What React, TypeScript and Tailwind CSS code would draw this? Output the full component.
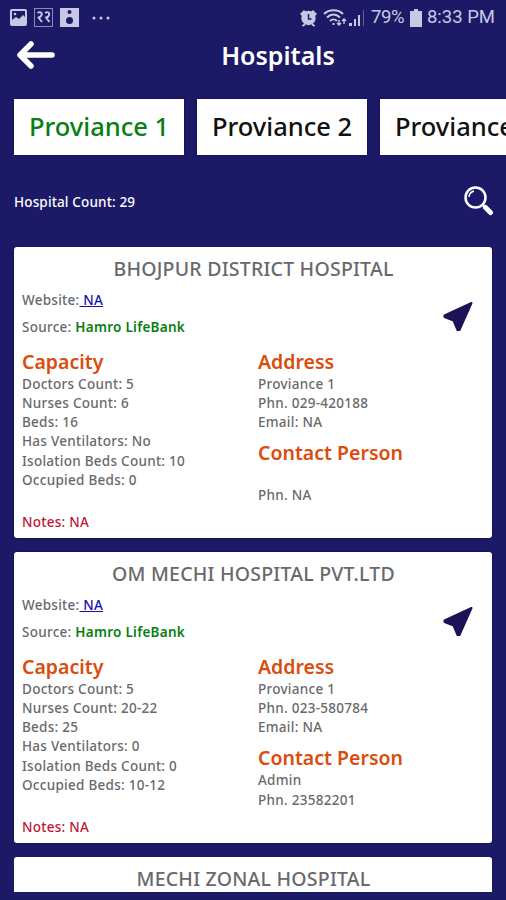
import React from "react";

type Hospital = {
  name: string;
  capacity: string[];
  address: string[];
  contact: string[];
};

const hospitals: Hospital[] = [
  {
    name: "BHOJPUR DISTRICT HOSPITAL",
    capacity: ["Doctors Count: 5", "Nurses Count: 6", "Beds: 16", "Has Ventilators: No", "Isolation Beds Count: 10", "Occupied Beds: 0"],
    address: ["Proviance 1", "Phn. 029-420188", "Email: NA"],
    contact: ["", "Phn. NA"],
  },
  {
    name: "OM MECHI HOSPITAL PVT.LTD",
    capacity: ["Doctors Count: 5", "Nurses Count: 20-22", "Beds: 25", "Has Ventilators: 0", "Isolation Beds Count: 0", "Occupied Beds: 10-12"],
    address: ["Proviance 1", "Phn. 023-580784", "Email: NA"],
    contact: ["Admin", "Phn. 23582201"],
  },
];

function StatusBar() {
  return (
    <div className="flex h-[35px] shrink-0 items-center justify-between pl-[10px] pr-[11px] font-['Roboto',sans-serif] text-[#c9c8e4]">
      <div className="flex items-center">
        <svg width="17" height="17" viewBox="0 0 17 17" fill="none">
          <rect x="1" y="1" width="15" height="15" rx="1" stroke="currentColor" strokeWidth="2" />
          <path d="M2 11l4-3 3 2 4-4 3 3v7H2z" fill="currentColor" />
          <circle cx="5" cy="5" r="1.3" fill="currentColor" />
        </svg>
        <svg className="ml-[7px]" width="19" height="19" viewBox="0 0 19 19" fill="none" stroke="currentColor">
          <rect x=".5" y=".5" width="18" height="18" strokeOpacity=".65" />
          <path d="M3.500 5c3-2 5.500 0 3.500 3-1 2-3 1-3 1l4 5M11 5c3-2 5.500 0 3.500 3-1 2-3 1-3 1l4 5" strokeWidth="1.900" />
        </svg>
        <svg className="ml-[7px]" width="19" height="19" viewBox="0 0 19 19">
          <rect width="19" height="19" fill="currentColor" />
          <circle cx="9.5" cy="4" r="2" fill="#1c1a66" />
          <circle cx="9.5" cy="12.5" r="3.5" fill="#1c1a66" />
        </svg>
        <svg className="ml-[13px]" width="18" height="4" viewBox="0 0 18 4" fill="currentColor">
          <circle cx="2" cy="2" r="1.5" />
          <circle cx="9" cy="2" r="1.5" />
          <circle cx="16" cy="2" r="1.5" />
        </svg>
      </div>
      <div className="flex items-center text-[18.500px] leading-none">
        <svg width="17" height="18" viewBox="0 0 17 18" fill="currentColor">
          <circle cx="8.500" cy="9" r="7.200" />
          <path d="M0 5l4-4 2 2-4 4zM17 5l-4-4-2 2 4 4zM1.500 17l3-3 1 2-2 1.500zM15.500 17l-3-3-1 2 2 1.500z" />
          <path d="M8.500 5v5h3" fill="none" stroke="#1c1a66" strokeWidth="1.500" />
        </svg>
        <svg className="ml-[6px]" width="24" height="18" viewBox="0 0 24 18" fill="none" stroke="currentColor" strokeWidth="2">
          <path d="M1 5c5-5 14-5 19 0M4 8.500c4-4 9-4 13 0M7 12c2-2 5-2 7 0" />
          <path d="M10.500 14v2" />
          <path d="M16 11v5m-2-2l2 2 2-2M21 15v-5m-2 2l2-2 2 2" strokeWidth="1.400" />
        </svg>
        <svg className="ml-[1px]" width="17" height="18" viewBox="0 0 17 18" fill="currentColor">
          <path d="M1 14h3v3H1zM6 10h2v7H6zM10 6h2v11h-2z" />
          <path d="M15 1h1v16h-1z" opacity=".4" />
        </svg>
        <span className="ml-[6px] w-[35px] whitespace-nowrap tracking-[-0.300px]">79%</span>
        <svg className="ml-[4px]" width="12" height="18" viewBox="0 0 12 18" fill="currentColor">
          <path d="M4 0h4v2h4v16H0V2h4z" />
        </svg>
        <span className="ml-[5px] whitespace-nowrap">8:33 PM</span>
      </div>
    </div>
  );
}

function Heading({ children }: { children: string }) {
  return <h3 className="text-[19.500px] font-semibold leading-[27px] text-[#db4c0d]">{children}</h3>;
}

function Lines({ items }: { items: string[] }) {
  return (
    <div className="leading-[19.250px] tracking-[0.270px]">
      {items.map((item, i) => (
        <p key={i} className="h-[19.250px] whitespace-nowrap">{item}</p>
      ))}
    </div>
  );
}

function CardTitle({ children }: { children: string }) {
  return <h2 className="whitespace-nowrap pl-px text-center text-[19.500px] font-medium leading-[27px] tracking-[0.220px]">{children}</h2>;
}

function HospitalCard({ hospital }: { hospital: Hospital }) {
  return (
    <article className="h-[291px] shrink-0 rounded-[3px] bg-white px-[8px] pt-[8px] text-[13.500px] font-medium text-[#69696b] shadow-[0_0_2px_#060550]">
      <CardTitle>{hospital.name}</CardTitle>
      <div className="flex justify-between tracking-[0.270px]">
        <div className="pt-[5px]">
          <p className="h-[27px] leading-[27px]">Website:<a className="text-[#160dae] underline">&nbsp;NA</a></p>
          <p className="h-[27.500px] leading-[27.500px]">Source: <span className="font-semibold text-[#087e12]">Hamro LifeBank</span></p>
        </div>
        <svg className="mr-[11px] mt-[19px]" width="31" height="31" viewBox="0 0 31 31" fill="#1c1256" stroke="#1c1256" strokeWidth="2" strokeLinejoin="round">
          <path d="M29.500 2L2.500 14.500v1.500L11.500 19.500L15.500 29h2z" />
        </svg>
      </div>
      <div className="mt-[6px] flex">
        <section className="w-[236px]">
          <Heading>Capacity</Heading>
          <Lines items={hospital.capacity} />
        </section>
        <section>
          <Heading>Address</Heading>
          <Lines items={hospital.address} />
          <div className="mt-[7px]"><Heading>Contact Person</Heading></div>
          <Lines items={hospital.contact} />
        </section>
      </div>
      <p className="mt-[7px] leading-[20px] tracking-[0.270px] text-[#bd1734]">Notes: NA</p>
    </article>
  );
}

export default function App() {
  return (
    <main className="flex h-[900px] w-[506px] flex-col overflow-hidden bg-[#1c1a66] font-['Noto_Sans',sans-serif]">
      <StatusBar />
      <header className="grid h-[40px] shrink-0 grid-cols-[50px_1fr] items-center pl-[16px] pr-[16px]">
        <svg width="40" height="30" viewBox="0 0 40 30" fill="none" stroke="white" strokeWidth="5.500" strokeLinecap="round" strokeLinejoin="round">
          <path d="M36 15H4.500M15 4L4 15l11 11" />
        </svg>
        <h1 className="text-center text-[25px] font-semibold leading-[39px] text-white">Hospitals</h1>
      </header>
      <nav className="mt-[24px] flex shrink-0 gap-[13px] pl-[14px] text-[25.500px] font-medium text-[#111]">
        <button className="h-[56px] w-[170px] shrink-0 whitespace-nowrap bg-white pb-[2px] text-[#087e12] shadow-[0_0_2px_#060550]">Proviance 1</button>
        <button className="h-[56px] w-[170px] shrink-0 whitespace-nowrap bg-white pb-[2px] shadow-[0_0_2px_#060550]">Proviance 2</button>
        <button className="h-[56px] w-[170px] shrink-0 whitespace-nowrap bg-white pb-[2px] shadow-[0_0_2px_#060550]">Proviance 3</button>
      </nav>
      <div className="mt-[29px] flex h-[34px] shrink-0 items-center justify-between pl-[14px] pr-[12px] text-white">
        <p className="pt-[3px] text-[13.500px] font-medium tracking-[0.150px]">Hospital Count: 29</p>
        <svg width="30" height="31" viewBox="0 0 30 31" fill="none" stroke="white">
          <circle cx="11.500" cy="11.500" r="10" strokeWidth="2.500" />
          <path d="M5 11c0-3 2-5 5-6" strokeWidth="1.500" />
          <path d="M18.500 18.500l3 3" strokeWidth="2.500" />
          <path d="M21.500 21.500l5 5" strokeWidth="5" strokeLinecap="round" />
        </svg>
      </div>
      <section className="mt-[29px] flex h-[645px] shrink-0 flex-col gap-[14px] overflow-hidden px-[14px] [clip-path:inset(-4px_0_0_0)]">
        {hospitals.map((hospital) => <HospitalCard key={hospital.name} hospital={hospital} />)}
        <article className="h-[60px] shrink-0 rounded-t-[3px] bg-white pt-[8px] text-[#69696b]">
          <CardTitle>MECHI ZONAL HOSPITAL</CardTitle>
        </article>
      </section>
    </main>
  );
}
